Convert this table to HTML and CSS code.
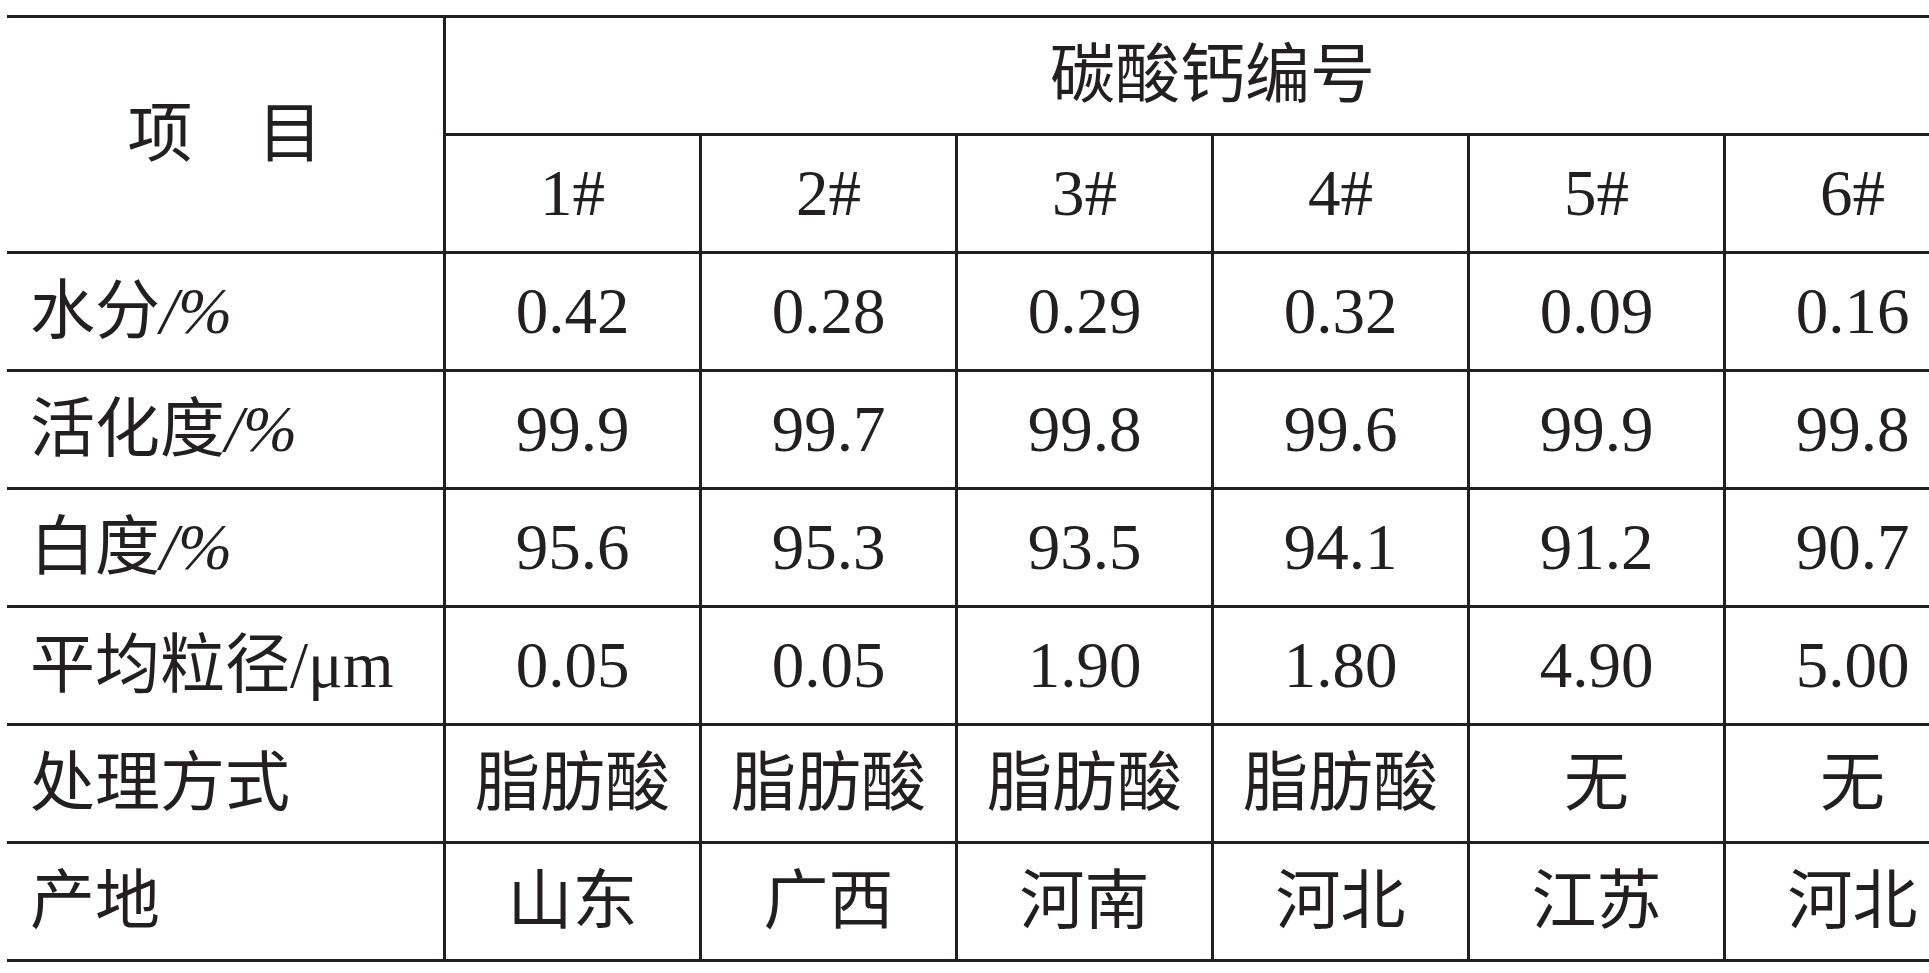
FILE: index.html
```html
<!DOCTYPE html>
<html lang="zh-CN">
<head>
<meta charset="utf-8">
<title>碳酸钙编号</title>
<link rel="stylesheet" href="styles.css">
</head>
<body>
<div class="table">
  <div class="cell head-item">项　目</div>
  <div class="cell head-group">碳酸钙编号</div>
  <div class="cell">1#</div>
  <div class="cell">2#</div>
  <div class="cell">3#</div>
  <div class="cell">4#</div>
  <div class="cell">5#</div>
  <div class="cell">6#</div>

  <div class="cell label">水分<i>/%</i></div>
  <div class="cell">0.42</div>
  <div class="cell">0.28</div>
  <div class="cell">0.29</div>
  <div class="cell">0.32</div>
  <div class="cell">0.09</div>
  <div class="cell">0.16</div>

  <div class="cell label">活化度<i>/%</i></div>
  <div class="cell">99.9</div>
  <div class="cell">99.7</div>
  <div class="cell">99.8</div>
  <div class="cell">99.6</div>
  <div class="cell">99.9</div>
  <div class="cell">99.8</div>

  <div class="cell label">白度<i>/%</i></div>
  <div class="cell">95.6</div>
  <div class="cell">95.3</div>
  <div class="cell">93.5</div>
  <div class="cell">94.1</div>
  <div class="cell">91.2</div>
  <div class="cell">90.7</div>

  <div class="cell label">平均粒径/μm</div>
  <div class="cell">0.05</div>
  <div class="cell">0.05</div>
  <div class="cell">1.90</div>
  <div class="cell">1.80</div>
  <div class="cell">4.90</div>
  <div class="cell">5.00</div>

  <div class="cell label">处理方式</div>
  <div class="cell">脂肪酸</div>
  <div class="cell">脂肪酸</div>
  <div class="cell">脂肪酸</div>
  <div class="cell">脂肪酸</div>
  <div class="cell">无</div>
  <div class="cell">无</div>

  <div class="cell label">产地</div>
  <div class="cell">山东</div>
  <div class="cell">广西</div>
  <div class="cell">河南</div>
  <div class="cell">河北</div>
  <div class="cell">江苏</div>
  <div class="cell">河北</div>
</div>
</body>
</html>
```

FILE: styles.css
```css
html, body {
  margin: 0;
  padding: 0;
  background: #ffffff;
  overflow: hidden;
}

body {
  width: 1929px;
  height: 973px;
}

.table {
  margin: 15px 0 0 7px;
  width: 1972px;
  display: grid;
  grid-template-columns: 436px repeat(6, 253px);
  grid-auto-rows: 115px;
  gap: 3px;
  padding: 3px 0;
  background: #231f20;
  font-family: "Liberation Serif", "Noto Sans CJK SC", serif;
  font-size: 65px;
  line-height: 1;
  color: #231f20;
}

.cell {
  background: #ffffff;
  display: flex;
  align-items: center;
  justify-content: center;
  white-space: nowrap;
}

.head-item {
  grid-row: span 2;
}

.head-group {
  grid-column: span 6;
}

.label {
  justify-content: flex-start;
  padding-left: 23px;
}

.label i {
  font-style: italic;
}
```
